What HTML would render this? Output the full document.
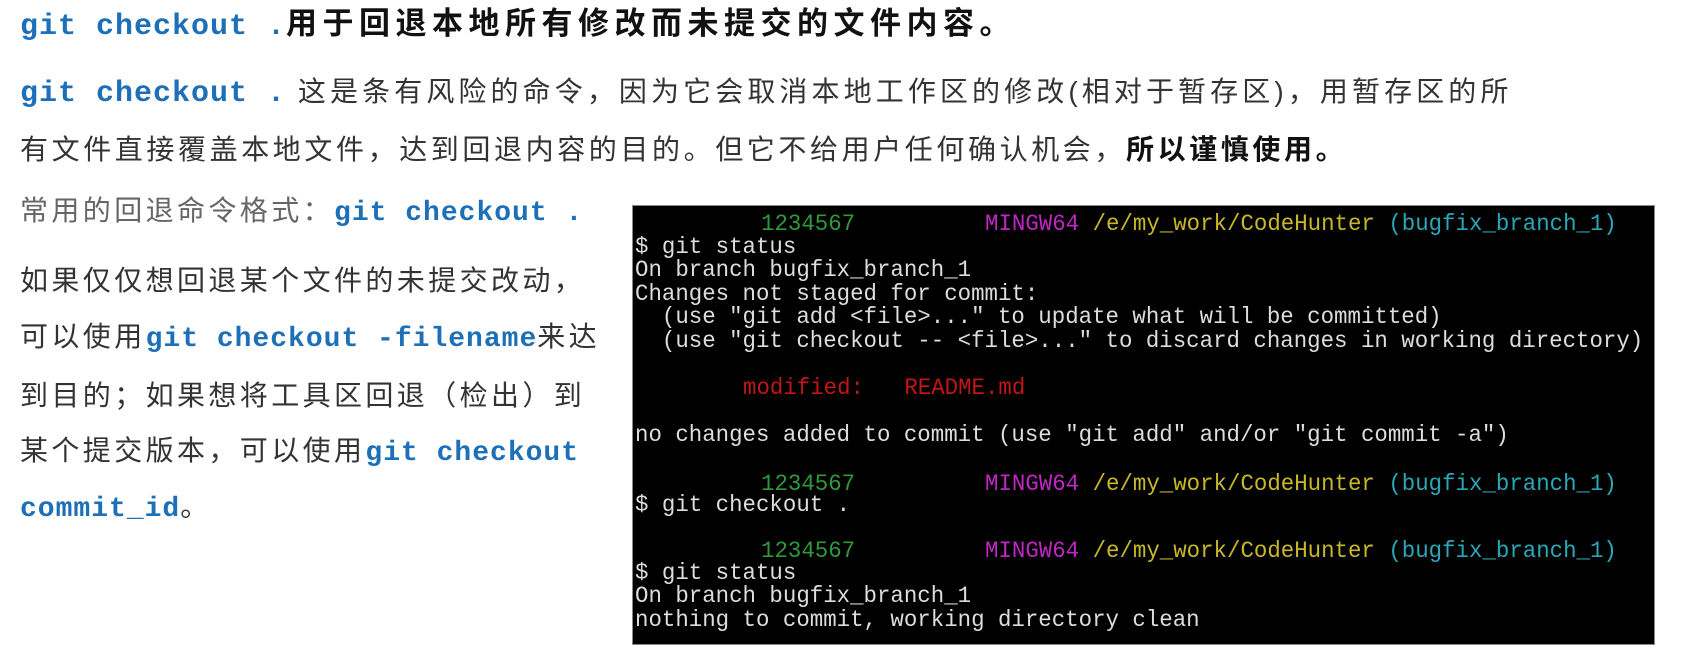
<!DOCTYPE html>
<html><head><meta charset="utf-8"><style>
body{margin:0;width:1682px;height:660px;background:#fff;position:relative;overflow:hidden;font-family:"Liberation Sans","Noto Sans CJK SC",sans-serif;}
.l{position:absolute;white-space:nowrap;font-size:28px;letter-spacing:3.4px;color:#333;line-height:36px;}
.c{font-family:"Liberation Mono",monospace;font-weight:bold;color:#1d6fb8;font-size:28px;letter-spacing:1px;}
.g{color:#666;}
.b{font-weight:bold;color:#111;}
#t{position:absolute;left:632px;top:205px;width:1023px;height:440px;background:#000;border:1px solid #888;box-sizing:border-box;}
.t{position:absolute;white-space:pre;font-family:"Liberation Mono",monospace;font-size:23px;line-height:23.4px;color:#ddd;transform:scaleX(0.974);transform-origin:left;}
.gr{color:#2e9a3a}.m{color:#c026c4}.y{color:#c8b829}.cy{color:#2aa7b8}.r{color:#c21515}
</style></head><body>
<div class="l" style="left:20px;top:6px;font-size:31px;letter-spacing:5.5px;"><span class="c" style="font-size:30px;letter-spacing:1px">git checkout .</span><span class="b">用于回退本地所有修改而未提交的文件内容。</span></div>
<div class="l" style="left:20px;top:74px;letter-spacing:4.1px"><span class="c" style="font-size:30px">git checkout .</span> 这是条有风险的命令，因为它会取消本地工作区的修改(相对于暂存区)，用暂存区的所</div>
<div class="l" style="left:20px;top:132px;letter-spacing:3.6px">有文件直接覆盖本地文件，达到回退内容的目的。但它不给用户任何确认机会，<span class="b">所以谨慎使用。</span></div>
<div class="l g" style="left:20px;top:193px;">常用的回退命令格式：<span class="c">git checkout .</span></div>
<div class="l" style="left:20px;top:263px;">如果仅仅想回退某个文件的未提交改动，</div>
<div class="l" style="left:20px;top:319px;">可以使用<span class="c">git checkout -filename</span>来达</div>
<div class="l" style="left:20px;top:378px;">到目的；如果想将工具区回退（检出）到</div>
<div class="l" style="left:20px;top:433px;">某个提交版本，可以使用<span class="c">git checkout</span></div>
<div class="l" style="left:20px;top:489px;"><span class="c">commit_id</span>。</div>
<div id="t"></div>
<div class="t" style="left:761px;top:213px"><span class="gr">1234567</span></div>
<div class="t" style="left:985px;top:213px"><span class="m">MINGW64</span> <span class="y">/e/my_work/CodeHunter</span> <span class="cy">(bugfix_branch_1)</span></div>
<div class="t" style="left:635px;top:236px">$ git status
On branch bugfix_branch_1
Changes not staged for commit:
  (use "git add &lt;file&gt;..." to update what will be committed)
  (use "git checkout -- &lt;file&gt;..." to discard changes in working directory)</div>
<div class="t" style="left:743px;top:377px"><span class="r">modified:   README.md</span></div>
<div class="t" style="left:635px;top:424px">no changes added to commit (use "git add" and/or "git commit -a")</div>
<div class="t" style="left:761px;top:473px"><span class="gr">1234567</span></div>
<div class="t" style="left:985px;top:473px"><span class="m">MINGW64</span> <span class="y">/e/my_work/CodeHunter</span> <span class="cy">(bugfix_branch_1)</span></div>
<div class="t" style="left:635px;top:494px">$ git checkout .</div>
<div class="t" style="left:761px;top:540px"><span class="gr">1234567</span></div>
<div class="t" style="left:985px;top:540px"><span class="m">MINGW64</span> <span class="y">/e/my_work/CodeHunter</span> <span class="cy">(bugfix_branch_1)</span></div>
<div class="t" style="left:635px;top:562px">$ git status
On branch bugfix_branch_1
nothing to commit, working directory clean</div>
</body></html>
